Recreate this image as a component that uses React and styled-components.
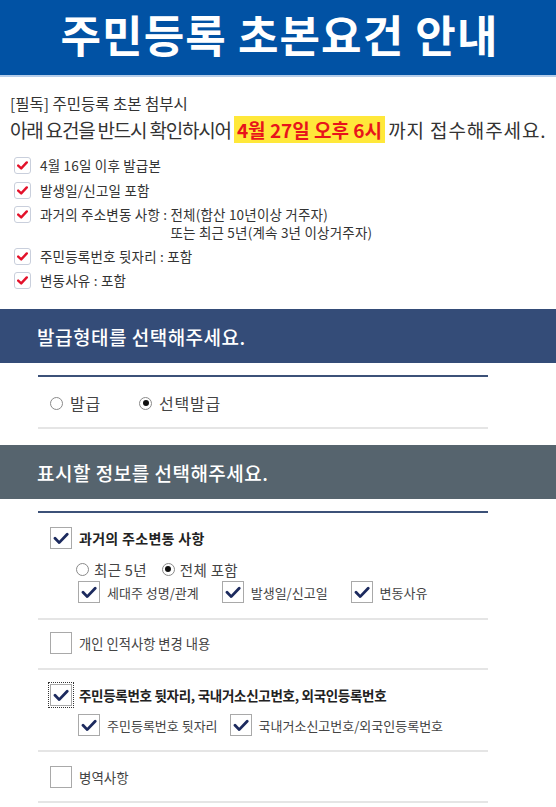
import React from "react";
import styled, { createGlobalStyle } from "styled-components";

const Global = createGlobalStyle`
  html, body { margin: 0; padding: 0; background: #fff; }
  body { font-family: "Noto Sans CJK KR", "Noto Sans", sans-serif; color: #333; font-size: 13px; }
`;

const Page = styled.div`
  width: 556px;
`;

const Header = styled.header`
  height: 75px;
  background: #0152a4;
  border-bottom: 2px solid #b5cdea;
  display: flex;
  align-items: center;
  justify-content: center;
`;

const Title = styled.h1`
  margin: 0 0 0 3px;
  color: #fff;
  font-size: 44px;
  font-weight: 700;
  letter-spacing: 1.1px;
  line-height: 1;
  padding-bottom: 8px;
`;

const Notice = styled.section`
  padding: 15px 0 0 10px;
`;

const Lead = styled.p`
  margin: 0;
  font-size: ${(p) => p.$size}px;
  color: #333;
  line-height: ${(p) => p.$lh}px;
  letter-spacing: ${(p) => p.$ls || 0}px;
  white-space: nowrap;
`;

const Highlight = styled.span`
  background: #ffe83a;
  color: #e8141b;
  font-weight: 700;
  padding: 0 3px;
  letter-spacing: 0;
`;

const Tail = styled.span`
  letter-spacing: 0.9px;
`;

const CheckList = styled.ul`
  list-style: none;
  margin: 11px 0 0;
  padding: 0 0 0 4px;
  display: flex;
  flex-direction: column;
  gap: 7.5px;
`;

const CheckItem = styled.li`
  display: flex;
  align-items: flex-start;
  gap: 9px;
  font-size: 13.5px;
  line-height: 17px;
  color: #333;
  letter-spacing: 0.2px;
`;

const MiniBox = styled.span`
  flex: none;
  width: 15px;
  height: 15px;
  border: 1px solid #c9cfdc;
  border-radius: 3px;
  display: flex;
  align-items: center;
  justify-content: center;
`;

const Split = styled.span`
  display: flex;
  white-space: pre;
`;

const Stack = styled.span`
  display: flex;
  flex-direction: column;
  line-height: 18.5px;
  margin: -1.5px 0;
`;

const SectionBar = styled.h2`
  margin: ${(p) => p.$mt}px 0 0;
  height: 54px;
  background: ${(p) => p.$bg};
  color: #fff;
  font-size: 19px;
  font-weight: 500;
  display: flex;
  align-items: center;
  padding-left: 37px;
  letter-spacing: 0.5px;
`;

const Panel = styled.div`
  margin: 12px 68px 0 38px;
  border-top: 2px solid #3c5178;
`;

const Row = styled.div`
  border-bottom: 2px solid #e5e5e5;
  padding: ${(p) => p.$pad};
  display: flex;
  flex-direction: column;
`;

const Line = styled.div`
  display: flex;
  align-items: center;
  height: ${(p) => p.$h || 22}px;
  margin-top: ${(p) => p.$mt || 0}px;
  gap: ${(p) => p.$gap || 0}px;
  padding-left: ${(p) => p.$indent || 0}px;
  font-size: ${(p) => p.$size || 13}px;
  letter-spacing: ${(p) => p.$ls || 0}px;
  color: #333;
`;

const Option = styled.label`
  display: flex;
  align-items: center;
  gap: ${(p) => p.$gap || 4}px;
  font-weight: ${(p) => (p.$bold ? 700 : 400)};
  color: ${(p) => (p.$bold ? "#222" : "#444")};
  white-space: nowrap;
`;

const Radio = styled.span`
  width: ${(p) => p.$s}px;
  height: ${(p) => p.$s}px;
  border-radius: 50%;
  border: 1px solid #8a8a8a;
  box-sizing: border-box;
  display: flex;
  align-items: center;
  justify-content: center;
  background: #fff;
  &::after {
    content: "";
    display: ${(p) => (p.$on ? "block" : "none")};
    width: ${(p) => p.$s - 7}px;
    height: ${(p) => p.$s - 7}px;
    border-radius: 50%;
    background: #111;
  }
`;

const Box = styled.span`
  flex: none;
  width: 22px;
  height: 22px;
  box-sizing: border-box;
  border: 1px solid #a9a9a9;
  background: #fff;
  display: flex;
  align-items: center;
  justify-content: center;
  outline: ${(p) => (p.$focus ? "1px dotted #333" : "none")};
  outline-offset: 1px;
`;

const RedCheck = () => (
  <svg width="11" height="9" viewBox="0 0 11 9">
    <path d="M1.2 4.6 L4.2 7.4 L9.8 1.4" fill="none" stroke="#e3112a" strokeWidth="2.4" strokeLinecap="round" strokeLinejoin="round" />
  </svg>
);

const NavyCheck = () => (
  <svg width="16" height="13" viewBox="0 0 16 13">
    <path d="M2 6.2 L6.2 10.6 L14.2 2.2" fill="none" stroke="#1c2a5e" strokeWidth="2.8" strokeLinecap="round" strokeLinejoin="round" />
  </svg>
);

const Check = ({ on, focus, children, bold }) => (
  <Option $gap={7} $bold={bold}>
    <Box $focus={focus}>{on && <NavyCheck />}</Box>
    {children}
  </Option>
);

const RadioOpt = ({ on, s, gap = 5, children }) => (
  <Option $gap={gap}>
    <Radio $s={s} $on={on} />
    {children}
  </Option>
);

export default function App() {
  return (
    <Page>
      <Global />
      <Header>
        <Title>주민등록 초본요건 안내</Title>
      </Header>
      <Notice>
        <Lead $size={15.5} $lh={22}>[필독] 주민등록 초본 첨부시</Lead>
        <Lead $size={19} $lh={32} $ls={-1.2}>
          아래 요건을 반드시 확인하시어 <Highlight>4월 27일 오후 6시</Highlight> <Tail>까지 접수해주세요.</Tail>
        </Lead>
        <CheckList>
          <CheckItem><MiniBox><RedCheck /></MiniBox><span>4월 16일 이후 발급본</span></CheckItem>
          <CheckItem><MiniBox><RedCheck /></MiniBox><span>발생일/신고일 포함</span></CheckItem>
          <CheckItem>
            <MiniBox><RedCheck /></MiniBox>
            <Split>
              {"과거의 주소변동 사항 : "}
              <Stack>
                <span>전체(합산 10년이상 거주자)</span>
                <span>또는 최근 5년(계속 3년 이상거주자)</span>
              </Stack>
            </Split>
          </CheckItem>
          <CheckItem><MiniBox><RedCheck /></MiniBox><span>주민등록번호 뒷자리 : 포함</span></CheckItem>
          <CheckItem><MiniBox><RedCheck /></MiniBox><span>변동사유 : 포함</span></CheckItem>
        </CheckList>
      </Notice>

      <SectionBar $bg="#344c78" $mt={20}>발급형태를 선택해주세요.</SectionBar>
      <Panel>
        <Row $pad="14px 0 12px 12px">
          <Line $gap={38} $size={16} $ls={0.8} $h={24}>
            <RadioOpt s={13} gap={7}>발급</RadioOpt>
            <RadioOpt s={13} gap={7} on>선택발급</RadioOpt>
          </Line>
        </Row>
      </Panel>

      <SectionBar $bg="#56646e" $mt={16}>표시할 정보를 선택해주세요.</SectionBar>
      <Panel>
        <Row $pad="14px 0 15px 12px">
          <Line $size={14} $ls={0.3}>
            <Check on bold>과거의 주소변동 사항</Check>
          </Line>
          <Line $indent={26} $gap={15} $mt={10} $h={20} $size={14.5} $ls={0.3}>
            <RadioOpt s={13}>최근 5년</RadioOpt>
            <RadioOpt s={13} on>전체 포함</RadioOpt>
          </Line>
          <Line $indent={28} $gap={23} $mt={2}>
            <Check on>세대주 성명/관계</Check>
            <Check on>발생일/신고일</Check>
            <Check on>변동사유</Check>
          </Line>
        </Row>
        <Row $pad="12px 0 14px 12px">
          <Line $size={13.3}>
            <Check>개인 인적사항 변경 내용</Check>
          </Line>
        </Row>
        <Row $pad="14px 0 14px 12px">
          <Line $size={13.5} $ls={-0.3}>
            <Check on bold focus>주민등록번호 뒷자리, 국내거소신고번호, 외국인등록번호</Check>
          </Line>
          <Line $indent={28} $gap={12} $mt={8}>
            <Check on>주민등록번호 뒷자리</Check>
            <Check on>국내거소신고번호/외국인등록번호</Check>
          </Line>
        </Row>
        <Row $pad="14px 0 13px 12px">
          <Line $size={13.5}>
            <Check>병역사항</Check>
          </Line>
        </Row>
      </Panel>
    </Page>
  );
}
